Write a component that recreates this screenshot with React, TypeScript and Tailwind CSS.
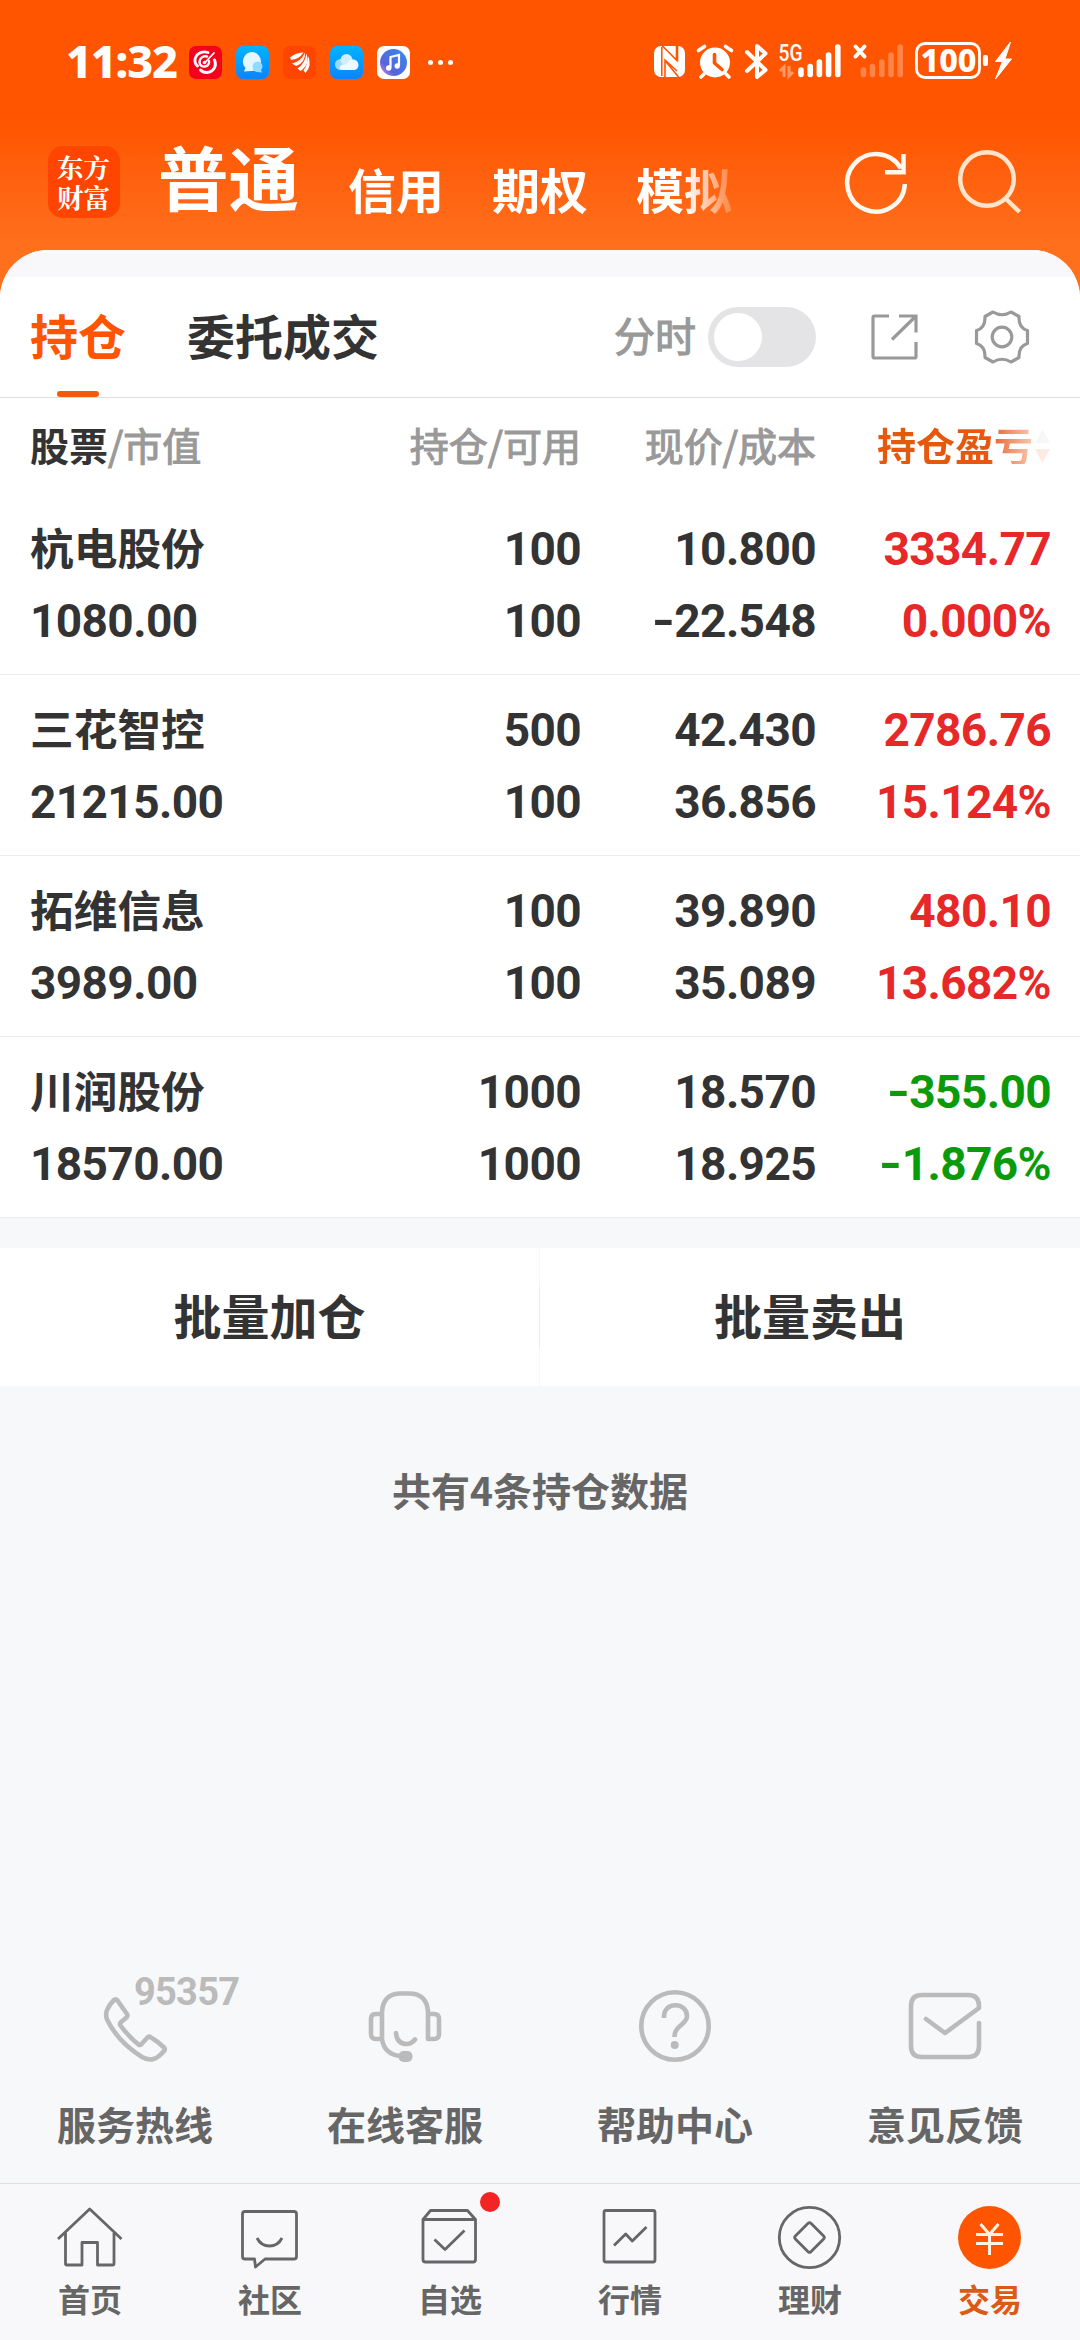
import type { ReactNode } from "react";

type Holding = {
  name: string;
  value: string;
  held: string;
  available: string;
  price: string;
  cost: string;
  profit: string;
  rate: string;
  gain: boolean;
};

const holdings: Holding[] = [
  { name: "杭电股份", value: "1080.00", held: "100", available: "100", price: "10.800", cost: "-22.548", profit: "3334.77", rate: "0.000%", gain: true },
  { name: "三花智控", value: "21215.00", held: "500", available: "100", price: "42.430", cost: "36.856", profit: "2786.76", rate: "15.124%", gain: true },
  { name: "拓维信息", value: "3989.00", held: "100", available: "100", price: "39.890", cost: "35.089", profit: "480.10", rate: "13.682%", gain: true },
  { name: "川润股份", value: "18570.00", held: "1000", available: "1000", price: "18.570", cost: "18.925", profit: "-355.00", rate: "-1.876%", gain: false },
];

function AppBadges() {
  return (
    <div className="ml-[12px] flex gap-[14px]">
      <svg className="size-[33px]" viewBox="0 0 33 33" fill="none">
        <rect width="33" height="33" rx="7" fill="#f5001d" />
        <path d="M19 6.500C12 4 5.500 9 6 15.500c.2 2 1 3.500 2.500 4.500" stroke="#fff" strokeWidth="2.800" strokeLinecap="round" />
        <path d="M18 10.500c-4.500-1-7.500 2-7.500 5.500 0 3.500 3 5 5.500 4.500 3-.5 4.500-3 4-5.500" stroke="#fff" strokeWidth="2.400" strokeLinecap="round" />
        <path d="M25 7 15.500 17" stroke="#fff" strokeWidth="1.800" strokeLinecap="round" />
        <path d="M25.500 14c2.500 6-1 12-7.500 12.500-3 .2-5-.8-6.500-2.500" stroke="#fff" strokeWidth="3" strokeLinecap="round" />
        <circle cx="15.500" cy="16.500" r="1.800" fill="#fff" />
      </svg>
      <svg className="size-[33px]" viewBox="0 0 33 33" fill="none">
        <defs>
          <linearGradient id="sky" x1="0" y1="0" x2="0" y2="1">
            <stop stopColor="#00b4ff" />
            <stop offset="1" stopColor="#0a84ff" />
          </linearGradient>
        </defs>
        <rect width="33" height="33" rx="7" fill="url(#sky)" />
        <path d="M16 6a9.500 9.500 0 1 1-1 19l-7 .5 1.500-3.500A9.500 9.500 0 0 1 16 6Z" fill="#e4f6ff" />
        <path d="M21.500 15.500a5 5 0 0 1 3.500 8.500l1 2.500-5-.5a5.300 5.300 0 0 1 .5-10.500Z" fill="#8fdcff" />
      </svg>
      <svg className="size-[33px]" viewBox="0 0 33 33" fill="none">
        <rect width="33" height="33" rx="7" fill="#ff4500" />
        <path d="M7 11.500Q13 6.500 20.500 6.500 16 13.500 8 14Z" fill="#fff" />
        <path d="M9 17.500Q18 15.500 22 6.500 22.500 17 13 20Z" fill="#fff" />
        <path d="M14.500 22.500Q22.500 17 23.300 7.500 27.500 18 17.500 25Z" fill="#fff" />
        <path d="M20.500 24.500Q25 18 25 10 29.500 19 22.500 27Z" fill="#fff" />
      </svg>
      <svg className="size-[33px]" viewBox="0 0 33 33" fill="none">
        <rect width="33" height="33" rx="7" fill="url(#sky)" />
        <circle cx="10.500" cy="18.500" r="5.500" fill="#9bd9ff" />
        <circle cx="16.500" cy="14" r="6" fill="#cfeeff" />
        <path d="M12 24c-2 0-3-2-2-3.500C12 17 15 20 17 17.500c1.500-3 4-4.500 7-4 2.500.5 4.500 2.500 4.500 5.500s-2 5-5 5Z" fill="#eefaff" />
      </svg>
      <svg className="size-[33px]" viewBox="0 0 33 33" fill="none">
        <defs>
          <linearGradient id="disc" x1="0" y1="1" x2="1" y2="0">
            <stop stopColor="#e68af0" />
            <stop offset=".3" stopColor="#5b63dc" />
            <stop offset=".8" stopColor="#3d7fe8" />
            <stop offset="1" stopColor="#ee9cf2" />
          </linearGradient>
        </defs>
        <rect width="33" height="33" rx="7" fill="#fff" />
        <circle cx="16.500" cy="16.500" r="13.500" fill="url(#disc)" />
        <path d="M13.500 21.500V11l8.500-2v10.500" stroke="#fff" strokeWidth="2.200" />
        <circle cx="11.700" cy="22" r="2.700" fill="#fff" />
        <circle cx="20.200" cy="20" r="2.700" fill="#fff" />
      </svg>
    </div>
  );
}

function StatusBar() {
  return (
    <div className="flex h-[124px] items-center text-white">
      <span className="ml-[66px] w-[111px] pb-[3px] font-['Noto_Sans'] text-[45px] leading-none font-extrabold tracking-[-1.200px]">
        11:32
      </span>
      <AppBadges />
      <div className="ml-[18px] flex gap-[5px]">
        <i className="size-[5px] rounded-full bg-white" />
        <i className="size-[5px] rounded-full bg-white" />
        <i className="size-[5px] rounded-full bg-white" />
      </div>
      <svg className="ml-auto mr-[60px] h-[70px] w-[370px]" viewBox="650 27 370 70" fill="none">
        <rect x="654" y="46" width="31" height="31" rx="7" fill="#fff" />
        <path d="M661.800 47V76M662 45.500 676.500 60V46M677.500 46V61.500M665 77V60.500L678.500 77M665 60 677 71" stroke="#ff5500" strokeWidth="1.600" />
        <circle cx="715" cy="62.500" r="15" fill="#fff" />
        <path d="m704 74-3 3M726 74l3 3M698.500 50.500l6-4M731.500 50.500l-6-4" stroke="#fff" strokeWidth="3.600" strokeLinecap="round" />
        <path d="M714.500 54.500V63l7.500 6.500" stroke="#ff5500" strokeWidth="3.600" strokeLinecap="round" strokeLinejoin="round" />
        <path d="m747 52 18.500 18-8.500 7V46l8.500 7.500L747 71" stroke="#fff" strokeWidth="4" strokeLinecap="round" strokeLinejoin="round" />
        <text x="778.500" y="60.500" textLength="24" lengthAdjust="spacingAndGlyphs" className="fill-white font-['Roboto'] text-[23px] font-medium">5G</text>
        <path d="m780 71 4-4v10M793 72l-4 4V66" stroke="#fff" strokeOpacity=".4" strokeWidth="3" />
        <path d="M801 70v4.500M810.200 66.500v8M819.400 62v12.500M828.600 55v19.500M837.800 47v27.500" stroke="#fff" strokeWidth="5.600" strokeLinecap="round" />
        <path d="m855.500 46.500 9 10M864.500 46.500l-9 10" stroke="#fff" strokeWidth="4" strokeLinecap="round" />
        <path d="M863.500 70v4.500M872.500 66.500v8M881.800 62v12.500M891 55v19.500M900.200 47v27.500" stroke="#fff" strokeOpacity=".28" strokeWidth="5.600" strokeLinecap="round" />
        <rect x="916.500" y="43.500" width="63" height="34" rx="8.500" stroke="#fff" strokeWidth="2.800" />
        <rect x="983" y="55" width="5" height="11" rx="2" fill="#fff" />
        <text x="920.500" y="72" textLength="56" lengthAdjust="spacingAndGlyphs" className="fill-white font-['Noto_Sans'] text-[32px] font-extrabold">100</text>
        <path d="m1010.500 42-15 19.500h7L995.500 79 1011.500 59h-6.500Z" fill="#fff" stroke="#fff" strokeLinejoin="round" />
      </svg>
    </div>
  );
}

function AccountHeader() {
  return (
    <div className="flex h-[126px]">
      <div className="mt-[22px] ml-[48px] flex size-[72px] items-center justify-center rounded-[15px] bg-[#ff4500]">
        <p className="w-[54px] font-['Noto_Serif_CJK_SC','Noto_Sans_CJK_SC',sans-serif] text-[26.500px] leading-[30px] font-bold break-all text-white">东方财富</p>
      </div>
      <span className="mt-[13px] ml-[38px] w-[142px] text-[70.500px] leading-[76px] font-bold text-white">普通</span>
      <div className="mt-[34px] ml-[48px] flex h-[60px] w-[384px] gap-[48px] bg-linear-to-r from-white from-88% to-white/20 to-100% bg-clip-text text-[48px] leading-[60px] font-semibold text-transparent">
        <span>信用</span>
        <span>期权</span>
        <span>模拟</span>
      </div>
      <svg className="mt-[24px] ml-[109px] size-[70px]" viewBox="841 148 70 70" fill="none" stroke="#fff8f0" strokeWidth="4.500">
        <path d="M904.800 184A28.800 28.800 0 1 1 901 168.500M903.500 154v18.200H885" />
      </svg>
      <svg className="mt-[22px] ml-[43px] size-[70px]" viewBox="954 146 70 70" fill="none" stroke="#ffe4cc" strokeWidth="4.500">
        <circle cx="987" cy="179" r="26.800" />
        <path d="m1005.500 198.500 14 13.500" />
      </svg>
    </div>
  );
}

function TabBar() {
  return (
    <div className="flex h-[121px] items-center border-b border-[#dddddd] bg-white text-[48px] leading-none font-semibold text-[#333333]">
      <div className="relative ml-[30px] flex h-full w-[96px] items-center pb-[6px] text-[#ff5500]">
        持仓
        <i className="absolute bottom-0 left-[27px] h-[6px] w-[42px] rounded-full bg-[#f55a0c]" />
      </div>
      <span className="ml-[61px] pb-[6px]">委托成交</span>
      <span className="ml-auto pb-[5px] text-[41px] font-normal text-[#999999] [-webkit-text-stroke:1.2px_#999999]">分时</span>
      <div className="ml-[12px] flex h-[60px] w-[108px] items-center rounded-full bg-[#e4e4e6] p-[6px]">
        <i className="size-[48px] rounded-full bg-white" />
      </div>
      <svg className="ml-[53px] h-[50px] w-[50px]" viewBox="869 312 50 50" fill="none" stroke="#999" strokeWidth="3.200">
        <path d="M889 316h-14.500q-1.500 0-1.500 1.500v39q0 1.500 1.500 1.500h40q1.500 0 1.500-1.500V342M899 316h17v16.500M915.500 316.500 892 339.500" />
      </svg>
      <svg className="mr-[49px] ml-[54px] h-[58px] w-[58px]" viewBox="-29 -29 58 58" fill="none" stroke="#999" strokeWidth="3.200" strokeLinejoin="round">
        <path d="M-9-25Q0-19.500 9-25L17-20.500Q16.500-9 25.500-6.500V6.500Q16.500 9 17 20.500L9 25Q0 19.500-9 25L-17 20.500Q-16.500 9-25.500 6.500V-6.500Q-16.500-9-17-20.500Z" />
        <circle r="9.800" />
      </svg>
    </div>
  );
}

const columns = "grid grid-cols-[281px_270px_235px_235px] pl-[30px]";

/** A figure whose leading minus sign is drawn wider than the font's hyphen. */
function Figure({ text, className = "" }: { text: string; className?: string }) {
  const negative = text.startsWith("-");
  return (
    <span className={className}>
      {negative && <span className="inline-block origin-right scale-x-[1.300]">-</span>}
      {negative ? text.slice(1) : text}
    </span>
  );
}

function HoldingsTable() {
  return (
    <div className="bg-white">
      <div className={`${columns} h-[96px] items-center pb-[4px] text-right text-[39px] leading-none font-normal whitespace-nowrap text-[#999999]`}>
        <span className="text-left">
          <b className="font-semibold text-[#333333]">股票</b>
          <span className="[-webkit-text-stroke:1.1px_#999999]">/市值</span>
        </span>
        <span className="[-webkit-text-stroke:1.1px_#999999]">持仓/可用</span>
        <span className="[-webkit-text-stroke:1.1px_#999999]">现价/成本</span>
        <span className="flex items-center justify-end">
          <b className="bg-linear-to-r from-[#e5590f] from-72% to-[#f8c8b0] to-100% bg-clip-text font-semibold text-transparent">持仓盈亏</b>
          <svg className="mt-[3px] ml-[1px] h-[36px] w-[17px]" viewBox="0 0 17 36">
            <path d="M8.500 1 16 15H1Z" fill="#f7f7f8" />
            <path d="M8.500 35 16 21H1Z" fill="#fdebe3" />
          </svg>
        </span>
      </div>
      {holdings.map((h) => {
        const tone = h.gain ? "text-[#e62828]" : "text-[#0a9a0a]";
        return (
          <div
            key={h.name}
            className={`${columns} h-[181px] grid-rows-[72px_72px] content-center border-b border-[#ececee] pt-[2px] text-right font-['Roboto','Noto_Sans_CJK_SC',sans-serif] text-[46px] leading-[72px] font-bold tracking-[-0.600px] text-[#333333]`}
          >
            <span className="pt-px text-left text-[43.700px] tracking-normal">{h.name}</span>
            <Figure text={h.held} />
            <Figure text={h.price} />
            <Figure text={h.profit} className={tone} />
            <Figure text={h.value} className="text-left" />
            <Figure text={h.available} />
            <Figure text={h.cost} />
            <Figure text={h.rate} className={tone} />
          </div>
        );
      })}
    </div>
  );
}

function ServiceItem({ label, children }: { label: string; children: ReactNode }) {
  return (
    <div className="flex flex-col items-center">
      <svg className="h-[110px] w-[270px]" viewBox="0 1965 270 110" fill="none" stroke="#bbb" strokeWidth="4.600" strokeLinecap="round" strokeLinejoin="round">
        {children}
      </svg>
      <span className="mt-[19px] mb-[3px] text-[39px] leading-[58px] font-bold text-[#666666]">{label}</span>
    </div>
  );
}

function Services() {
  return (
    <div className="grid grid-cols-4">
      <ServiceItem label="服务热线">
        <path d="M113.500 2000.500Q115.500 1998.500 117.500 2000.500L127 2014Q128 2016 126.500 2017.500L120.500 2022.500Q119.500 2024 120.500 2025.500Q129 2037 138.500 2044.500Q140 2045.500 141.500 2044L147.500 2037.500Q149 2036 151 2037.500Q158 2041.500 164 2047.500Q165.500 2049.500 164 2051Q158 2058 153.500 2059Q148 2060.500 142 2057Q118 2042 107 2019.500Q105 2013.500 107.500 2009Q110 2004 113.500 2000.500Z" />
        <text x="134" y="2005" textLength="106" stroke="none" className="fill-[#bbbbbb] font-['Roboto'] text-[38px] font-bold">95357</text>
      </ServiceItem>
      <ServiceItem label="在线客服">
        <path d="M112 2039V2012Q113 1993.500 131 1993.500H139Q157 1993.500 158 2012V2039H164Q169 2039 169 2034V2019Q169 2014 164 2014H158M112 2014H106Q101 2014 101 2019V2034Q101 2039 106 2039H112Q114 2054 130 2056M126 2033Q127 2044 136.500 2044Q141.500 2044 145 2039.500" />
        <rect x="128.500" y="2051" width="14" height="11" rx="5" fill="#bbb" stroke="none" />
      </ServiceItem>
      <ServiceItem label="帮助中心">
        <circle cx="135" cy="2026" r="33.700" />
        <path d="M124 2018V2016.500C124 2001 147 2002 147 2016C147 2025 134.500 2025 134.500 2037" strokeLinecap="butt" />
        <circle cx="134.700" cy="2045" r="4" fill="#bbb" stroke="none" />
      </ServiceItem>
      <ServiceItem label="意见反馈">
        <path d="M169 2023V2046Q169 2057 158 2057H112Q101 2057 101 2046V2006Q101 1995 112 1995H158Q169 1995 169 2006V2008L135 2033 116 2019" />
      </ServiceItem>
    </div>
  );
}

function NavItem({ label, active = false, dot = false, children }: { label: string; active?: boolean; dot?: boolean; children: ReactNode }) {
  return (
    <div className="relative flex flex-col items-center">
      <svg className="h-[80px] w-[180px]" viewBox="0 2196 180 80" fill="none" stroke="#666" strokeWidth="2.800" strokeLinejoin="round">
        {children}
      </svg>
      {dot && <i className="absolute top-[-4px] left-[120px] size-[20px] rounded-full bg-[#f22424]" />}
      <span className={active ? "mt-[-2px] text-[32px] leading-[48px] font-semibold text-[#dc5a14]" : "mt-[-2px] text-[32px] leading-[48px] font-semibold text-[#666666]"}>{label}</span>
    </div>
  );
}

function BottomNav() {
  return (
    <nav className="grid h-[157px] grid-cols-6 border-t border-[#dfe0e3] bg-[#f8f8fa] pt-[12px]">
      <NavItem label="首页">
        <path d="M58 2239 89.700 2209 121.500 2239M65.500 2233V2263.500Q65.500 2265 67 2265H82V2242.500H97.500V2265H112.500Q114 2265 114 2263.500V2233" />
      </NavItem>
      <NavItem label="社区">
        <path d="M65 2211.500H114Q116.500 2211.500 116.500 2214V2256.500Q116.500 2259 114 2259H85L75.500 2267 74.500 2259H65Q62.500 2259 62.500 2256.500V2214Q62.500 2211.500 65 2211.500ZM77 2238Q81 2246 89.500 2246Q98 2246 102 2238" />
      </NavItem>
      <NavItem label="自选" dot>
        <path d="M63 2219.500 70.500 2210.500H107.500L115.500 2219.500V2259.500Q115.500 2262 113 2262H65.500Q63 2262 63 2259.500ZM63 2219.500H115.500M74.500 2239.500 85 2249.500 104.500 2230.500" />
      </NavItem>
      <NavItem label="行情">
        <rect x="64" y="2210.500" width="51" height="51.500" rx="2" />
        <path d="M74 2245.500 85.700 2234 92.300 2241 106.500 2227" />
      </NavItem>
      <NavItem label="理财">
        <circle cx="89.500" cy="2237.500" r="30.200" />
        <rect x="78.500" y="2226.500" width="22" height="22" rx="2" transform="rotate(45 89.500 2237.500)" />
      </NavItem>
      <NavItem label="交易" active>
        <circle cx="89.500" cy="2237.500" r="31.500" fill="#ff5500" stroke="none" />
        <path d="M80.500 2224 89.500 2234.500 98.500 2224M76 2234.500H103M76 2243.500H103M89.500 2234V2255" stroke="#fff3e8" strokeWidth="3" />
      </NavItem>
    </nav>
  );
}

export default function App() {
  return (
    <div className="flex h-[2340px] w-[1080px] flex-col overflow-hidden bg-linear-to-b from-[#ff5500] from-[124px] to-[#ff701c] to-[250px] font-['Noto_Sans_CJK_SC',sans-serif]">
      <StatusBar />
      <AccountHeader />
      <main className="flex flex-1 flex-col overflow-hidden rounded-t-[48px] bg-[#f7f8fa]">
        <div className="h-[27px] shrink-0 border-t-[3px] border-[#fffaf5] bg-[#f8f8fa]" />
        <TabBar />
        <HoldingsTable />
        <div className="mt-[30px] grid h-[138px] grid-cols-[539px_1px_540px] bg-white text-center text-[48px] leading-[132px] font-semibold text-[#333333]">
          <span>批量加仓</span>
          <i className="flex items-center bg-[#f7f8fa]">
            <i className="h-[60px] w-px bg-[#ebebed]" />
          </i>
          <span>批量卖出</span>
        </div>
        <p className="mt-[74px] text-center text-[39px] leading-[58px] font-semibold text-[#666666]">共有4条持仓数据</p>
        <div className="mt-auto mb-[28px]">
          <Services />
        </div>
        <BottomNav />
      </main>
    </div>
  );
}
